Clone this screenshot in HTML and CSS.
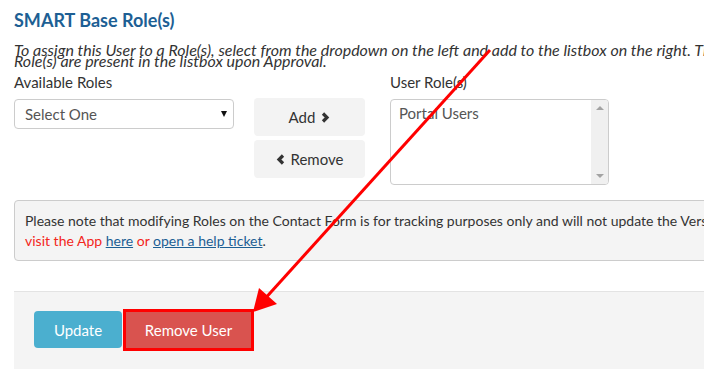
FILE: index.html
```html
<!DOCTYPE html>
<html lang="en">
<head>
    <meta charset="UTF-8">
    <meta name="viewport" content="width=device-width, initial-scale=1.0">
    <title>SMART Base Role(s)</title>
    <link rel="stylesheet" href="styles.css">
</head>
<body>
    <div class="page">
        <h3 class="section-title">SMART Base Role(s)</h3>
        <p class="hint">To assign this User to a Role(s), select from the dropdown on the left and add to the listbox on the right. The<br>Role(s) are present in the listbox upon Approval.</p>

        <div class="roles">
            <div class="col col-left">
                <label class="col-label">Available Roles</label>
                <div class="select-wrap">
                    <select class="role-select">
                        <option>Select One</option>
                    </select>
                </div>
            </div>

            <div class="col col-mid">
                <button class="move-btn">Add
                    <svg class="chev" width="10" height="11" viewBox="0 0 10 11"><polyline points="3,1.5 7,5.5 3,9.5" /></svg>
                </button>
                <button class="move-btn">
                    <svg class="chev" width="10" height="11" viewBox="0 0 10 11"><polyline points="7,1.5 3,5.5 7,9.5" /></svg>
                    Remove</button>
            </div>

            <div class="col col-right">
                <label class="col-label">User Role(s)</label>
                <div class="listbox">
                    <div class="listbox-items">
                        <div class="listbox-item">Portal Users</div>
                    </div>
                    <div class="scrollbar">
                        <span class="scroll-up"></span>
                        <span class="scroll-down"></span>
                    </div>
                </div>
            </div>
        </div>

        <div class="note">
            Please note that modifying Roles on the Contact Form is for tracking purposes only and will not update the Version of SMART Base. To change Roles,<br>
            <span class="warn">visit the App</span> <a href="#">here</a> <span class="warn">or</span> <a href="#">open a help ticket</a>.
        </div>

        <div class="form-footer">
            <button class="btn btn-info">Update</button>
            <button class="btn btn-danger highlight">Remove User</button>
        </div>
    </div>

    <!-- annotation arrow -->
    <svg class="annotation" width="704" height="369" viewBox="0 0 704 369">
        <line x1="490" y1="50" x2="262" y2="302" />
        <polygon points="253,312 259,288 277,304" />
    </svg>
</body>
</html>
```

FILE: styles.css
```css
/* Global */
body {
    margin: 0;
    padding: 0;
    font-family: Lato, "Open Sans", sans-serif;
    color: #333;
    background-color: #fff;
    overflow: hidden;
    height: 369px;
}

.page {
    width: 1000px;
    padding: 0 0 0 14px;
}

.section-title {
    margin: 0;
    padding-top: 9px;
    font-size: 18px;
    font-weight: 700;
    line-height: 22px;
    color: #1d5f94;
}

.hint {
    margin: 13px 0 0 0;
    font-size: 16px;
    font-style: italic;
    line-height: 11px;
    color: #333;
}

/* Roles row */
.roles {
    display: flex;
    align-items: flex-start;
    margin-top: 8px;
}

.col-label {
    display: block;
    font-size: 15px;
    line-height: 17px;
    margin-bottom: 8px;
    color: #333;
}

.col-left {
    width: 220px;
}

.col-mid {
    width: 111px;
    margin-left: 20px;
    padding-top: 24px;
    display: flex;
    flex-direction: column;
    gap: 4px;
}

.col-right {
    width: 219px;
    margin-left: 25px;
}

.select-wrap {
    position: relative;
}

.select-wrap::after {
    content: "";
    position: absolute;
    right: 7px;
    top: 12px;
    border-left: 3px solid transparent;
    border-right: 3px solid transparent;
    border-top: 6px solid #111;
    pointer-events: none;
}

.role-select {
    appearance: none;
    -webkit-appearance: none;
    width: 220px;
    height: 30px;
    padding: 0 10px;
    border: 1px solid #ccc;
    border-radius: 4px;
    background-color: #fff;
    font-family: inherit;
    font-size: 15px;
    color: #555;
}

.move-btn {
    height: 38px;
    border: none;
    border-radius: 4px;
    background-color: #f3f3f3;
    font-family: inherit;
    font-size: 15px;
    color: #333;
    display: flex;
    align-items: center;
    justify-content: center;
    gap: 5px;
    cursor: pointer;
}

.chev polyline {
    fill: none;
    stroke: #333;
    stroke-width: 3.2;
}

.listbox {
    display: flex;
    height: 84px;
    border: 1px solid #ccc;
    border-radius: 4px;
    overflow: hidden;
}

.listbox-items {
    flex: 1;
    padding: 4px 8px;
    font-size: 15px;
    color: #555;
}

.scrollbar {
    width: 17px;
    background-color: #f0f0f0;
    display: flex;
    flex-direction: column;
    justify-content: space-between;
    align-items: center;
    padding: 6px 0;
}

.scroll-up {
    border-left: 4px solid transparent;
    border-right: 4px solid transparent;
    border-bottom: 4px solid #a3a3a3;
}

.scroll-down {
    border-left: 4px solid transparent;
    border-right: 4px solid transparent;
    border-top: 4px solid #a3a3a3;
}

/* Note */
.note {
    margin-top: 15px;
    padding: 10px 10px 9px 10px;
    background-color: #f4f4f4;
    border: 1px solid #ccc;
    border-radius: 4px;
    font-size: 14px;
    line-height: 20px;
    color: #333;
}

.warn {
    color: #f3261b;
}

.note a {
    color: #1d5f94;
    text-decoration: underline;
}

/* Footer */
.form-footer {
    margin-top: 30px;
    height: 100px;
    padding: 19px 0 0 20px;
    background-color: #f4f4f4;
    border-top: 1px solid #e3e3e3;
    display: flex;
    align-items: flex-start;
    gap: 4px;
    box-sizing: border-box;
}

.btn {
    height: 37px;
    border: none;
    border-radius: 4px;
    font-family: inherit;
    font-size: 15px;
    color: #fff;
    cursor: pointer;
}

.btn-info {
    width: 88px;
    background-color: #4bafcf;
}

.btn-danger {
    width: 125px;
    margin-top: 1px;
    height: 36px;
    background-color: #d9534f;
    border-radius: 0;
}

.highlight {
    outline: 3px solid #ff0000;
}

/* Annotation overlay */
.annotation {
    position: absolute;
    left: 0;
    top: 0;
    pointer-events: none;
}

.annotation line {
    stroke: #ff0000;
    stroke-width: 3;
}

.annotation polygon {
    fill: #ff0000;
}
```
